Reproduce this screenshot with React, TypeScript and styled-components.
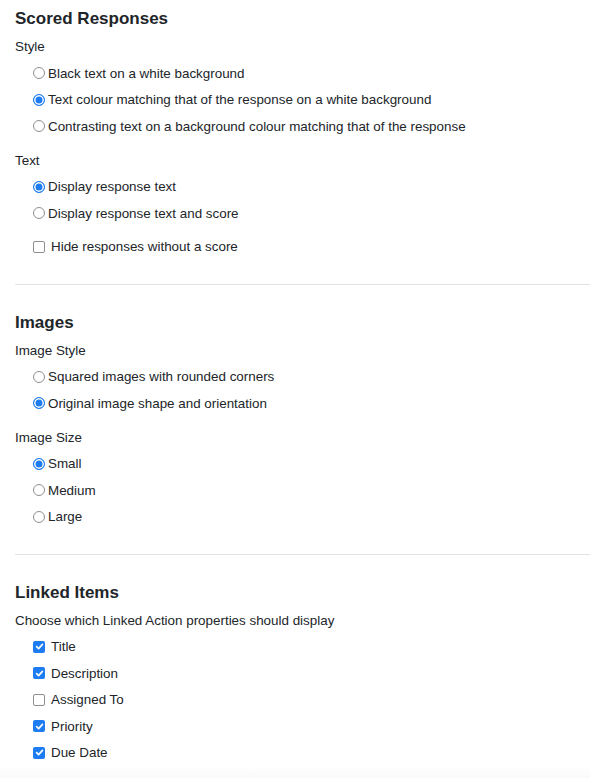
import React from 'react';
import styled, { createGlobalStyle } from 'styled-components';

const GlobalStyle = createGlobalStyle`
  body {
    margin: 0;
    background: #ffffff;
    font-family: 'Liberation Sans', Arial, sans-serif;
    color: #212529;
  }
`;

const Page = styled.div`
  padding: 8px 0 0 15px;
  width: 590px;
  min-height: 778px;
  box-sizing: border-box;
  position: relative;
  overflow: hidden;
`;

const Section = styled.section`
  padding-bottom: 23.5px;
  & + & {
    border-top: 1px solid #e3e3e3;
    padding-top: 27px;
  }
`;

const Heading = styled.h3`
  margin: 0 0 7px;
  font-size: 17px;
  font-weight: 700;
  line-height: 22px;
  color: #212529;
`;

const GroupLabel = styled.div`
  font-size: 13.4px;
  line-height: 20px;
  margin-top: 1px;
  & + * {
    margin-top: 3px;
  }
`;

const Options = styled.div`
  display: flex;
  flex-direction: column;
  padding-left: 18px;
  & + ${GroupLabel} {
    margin-top: 11px;
  }
`;

const Row = styled.label<{ $gapBefore?: boolean }>`
  display: flex;
  align-items: center;
  height: 26.5px;
  font-size: 13.4px;
  margin-top: ${(p) => (p.$gapBefore ? '7px' : '0')};
`;

const Radio = styled.span<{ $on?: boolean }>`
  width: 12px;
  height: 12px;
  border-radius: 50%;
  box-sizing: border-box;
  margin-right: 3px;
  flex: none;
  border: ${(p) => (p.$on ? '1.5px solid #1d7cf2' : '1px solid #8f8f8f')};
  background: ${(p) => (p.$on ? '#1d7cf2' : '#fff')};
  box-shadow: ${(p) => (p.$on ? 'inset 0 0 0 1.5px #fff' : 'none')};
`;

const Check = styled.span<{ $on?: boolean }>`
  width: 12px;
  height: 12px;
  border-radius: 2px;
  box-sizing: border-box;
  margin-right: 6px;
  flex: none;
  display: flex;
  align-items: center;
  justify-content: center;
  border: ${(p) => (p.$on ? 'none' : '1px solid #8f8f8f')};
  background: ${(p) => (p.$on ? '#1d7cf2' : '#fff')};
`;

const BottomShade = styled.div`
  position: absolute;
  left: 0;
  right: 0;
  bottom: 0;
  height: 24px;
  background: linear-gradient(to bottom, rgba(240, 240, 240, 0), rgba(242, 242, 242, 0.85));
  pointer-events: none;
`;

const Tick = () => (
  <svg width="9" height="9" viewBox="0 0 10 10">
    <polyline points="1.8,5.2 4,7.4 8.3,2.6" fill="none" stroke="#fff" strokeWidth="1.8" strokeLinecap="round" strokeLinejoin="round" />
  </svg>
);

const RadioRow = ({ on, children }: { on?: boolean; children: React.ReactNode }) => (
  <Row>
    <Radio $on={on} />
    {children}
  </Row>
);

const CheckRow = ({ on, gap, children }: { on?: boolean; gap?: boolean; children: React.ReactNode }) => (
  <Row $gapBefore={gap}>
    <Check $on={on}>{on && <Tick />}</Check>
    {children}
  </Row>
);

export default function App() {
  return (
    <>
      <GlobalStyle />
      <Page>
        <Section>
          <Heading>Scored Responses</Heading>
          <GroupLabel>Style</GroupLabel>
          <Options>
            <RadioRow>Black text on a white background</RadioRow>
            <RadioRow on>Text colour matching that of the response on a white background</RadioRow>
            <RadioRow>Contrasting text on a background colour matching that of the response</RadioRow>
          </Options>
          <GroupLabel>Text</GroupLabel>
          <Options>
            <RadioRow on>Display response text</RadioRow>
            <RadioRow>Display response text and score</RadioRow>
            <CheckRow gap>Hide responses without a score</CheckRow>
          </Options>
        </Section>
        <Section>
          <Heading>Images</Heading>
          <GroupLabel>Image Style</GroupLabel>
          <Options>
            <RadioRow>Squared images with rounded corners</RadioRow>
            <RadioRow on>Original image shape and orientation</RadioRow>
          </Options>
          <GroupLabel>Image Size</GroupLabel>
          <Options>
            <RadioRow on>Small</RadioRow>
            <RadioRow>Medium</RadioRow>
            <RadioRow>Large</RadioRow>
          </Options>
        </Section>
        <Section>
          <Heading>Linked Items</Heading>
          <GroupLabel>Choose which Linked Action properties should display</GroupLabel>
          <Options>
            <CheckRow on>Title</CheckRow>
            <CheckRow on>Description</CheckRow>
            <CheckRow>Assigned To</CheckRow>
            <CheckRow on>Priority</CheckRow>
            <CheckRow on>Due Date</CheckRow>
          </Options>
        </Section>
        <BottomShade />
      </Page>
    </>
  );
}
